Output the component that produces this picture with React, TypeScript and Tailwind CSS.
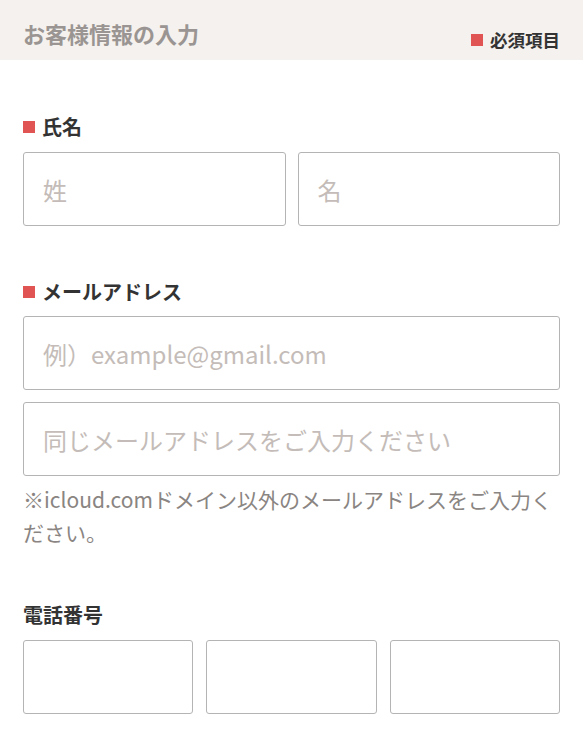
import React from "react";

const font = { fontFamily: '"Noto Sans CJK JP", "Noto Sans", sans-serif' };

function Mark() {
  return <span className="inline-block h-3 w-3 shrink-0 bg-[#e05454]" />;
}

function Label({ text, required }: { text: string; required?: boolean }) {
  return (
    <div className="flex items-center gap-[7px] h-[30px]">
      {required && <Mark />}
      <span className="text-[20px] font-bold leading-none text-[#333]">{text}</span>
    </div>
  );
}

function Field({ placeholder }: { placeholder?: string }) {
  return (
    <input
      type="text"
      placeholder={placeholder}
      className="h-[74px] w-full min-w-0 rounded-[3px] border border-[#b4b4b4] bg-white px-[19px] text-[24px] text-[#333] outline-none placeholder:text-[#c4bcb8]"
      style={font}
    />
  );
}

export default function App() {
  return (
    <div className="min-h-screen bg-white" style={font}>
      <header className="flex h-[60px] items-start justify-between bg-[#f5f1ee] px-[23px]">
        <h2 className="pt-[18px] text-[22px] font-bold leading-[30px] text-[#9a9592]">お客様情報の入力</h2>
        <div className="flex items-center gap-[7px] pt-[27px]">
          <Mark />
          <span className="text-[17.5px] font-bold leading-[26px] text-[#333]">必須項目</span>
        </div>
      </header>

      <form className="px-[23px] pt-[52px]">
        <section>
          <Label text="氏名" required />
          <div className="mt-[10px] grid grid-cols-2 gap-3">
            <Field placeholder="姓" />
            <Field placeholder="名" />
          </div>
        </section>

        <section className="mt-[51px]">
          <Label text="メールアドレス" required />
          <div className="mt-[9px] flex flex-col gap-3">
            <Field placeholder="例）example@gmail.com" />
            <Field placeholder="同じメールアドレスをご入力ください" />
          </div>
          <p className="mt-[7px] text-[21px] leading-[33px] text-[#8a8582]">
            ※icloud.comドメイン以外のメールアドレスをご入力ください。
          </p>
        </section>

        <section className="mt-[51px]">
          <Label text="電話番号" />
          <div className="mt-[10px] grid grid-cols-3 gap-[13px]">
            <Field />
            <Field />
            <Field />
          </div>
        </section>
      </form>
    </div>
  );
}
